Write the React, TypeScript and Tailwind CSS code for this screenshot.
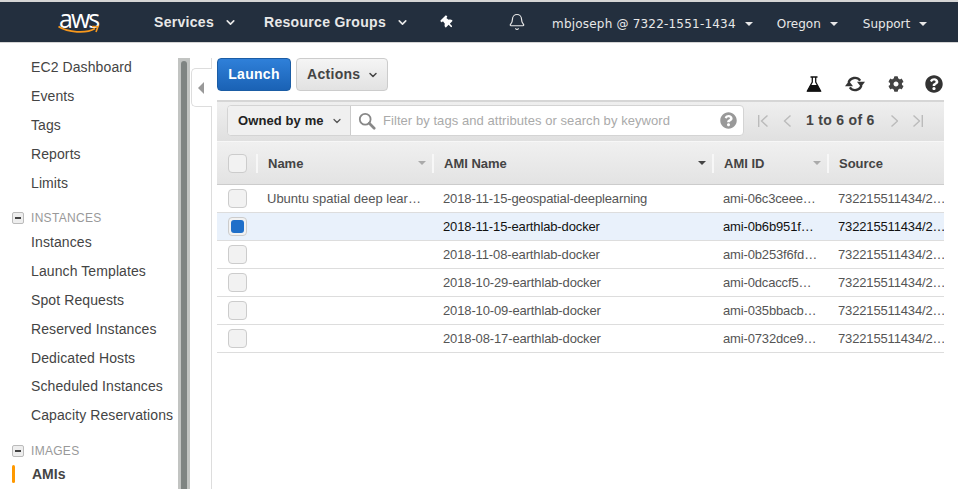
import { Bell, ChevronDown } from 'lucide-react'
import { FaCog, FaQuestionCircle, FaThumbtack } from 'react-icons/fa'

const sans = 'font-["Liberation_Sans",Arial,sans-serif]'

const rows = [
  { name: 'Ubuntu spatial deep lear…', ami: '2018-11-15-geospatial-deeplearning', id: 'ami-06c3ceee…' },
  { name: '', ami: '2018-11-15-earthlab-docker', id: 'ami-0b6b951f…', selected: true },
  { name: '', ami: '2018-11-08-earthlab-docker', id: 'ami-0b253f6fd…' },
  { name: '', ami: '2018-10-29-earthlab-docker', id: 'ami-0dcaccf5…' },
  { name: '', ami: '2018-10-09-earthlab-docker', id: 'ami-035bbacb…' },
  { name: '', ami: '2018-08-17-earthlab-docker', id: 'ami-0732dce9…' },
]

function SideLink({ label, tall }: { label: string; tall?: boolean }) {
  return (
    <div className={`flex items-center pl-[31px] text-[14px] tracking-[0.1px] text-[#444] ${tall ? 'h-[29px]' : 'h-[28.8px]'}`}>
      {label}
    </div>
  )
}

function SideGroup({ label }: { label: string }) {
  return (
    <div className="flex h-[18px] items-center text-[12px] tracking-[0.3px] text-[#999]">
      <span className="ml-[12px] mr-[7px] flex h-[12px] w-[12px] items-center justify-center rounded-[2px] border border-[#bbb] bg-[#eee]">
        <span className="h-[2px] w-[6px] bg-[#444]" />
      </span>
      {label}
    </div>
  )
}

function Check({ selected }: { selected?: boolean }) {
  return (
    <span className="flex h-[19px] w-[19px] items-center justify-center rounded-[4px] border border-[#ccc] bg-[#f2f2f2]">
      {selected && <span className="h-[13px] w-[13px] rounded-[3px] bg-[#1f6fc9]" />}
    </span>
  )
}

function HeaderCell({ label, width, dark }: { label: string; width: string; dark?: boolean }) {
  return (
    <div className={`${width} flex h-full shrink-0 items-center`}>
      <div className="flex h-[19px] w-full items-center border-l-2 border-[#f7f7f7] pl-[10px] pr-[6px] text-[13px] font-bold text-[#444]">
        <span className="mt-[1px] flex-1">{label}</span>
        <span className={`h-0 w-0 border-x-[4px] border-t-[4px] border-x-transparent ${dark ? 'border-t-[#444]' : 'border-t-[#aaa]'}`} />
      </div>
    </div>
  )
}

function Caret() {
  return <span className="ml-[9px] h-0 w-0 border-x-[4px] border-t-[4px] border-x-transparent border-t-[#e8e8e8]" />
}

function PageIcon({ d, width, className }: { d: string; width: number; className: string }) {
  return (
    <svg viewBox={`0 0 ${width} 12`} width={width} height={12} className={className}>
      <path d={d} fill="none" stroke="#bbb" strokeWidth="1.4" />
    </svg>
  )
}

export default function App() {
  return (
    <div className={`${sans} h-[489px] w-[958px] overflow-hidden bg-white`}>
      <header className="box-border flex h-[43px] items-center border-t-2 border-b border-t-[#d5d5d5] border-b-[#d5d5d5] bg-[#232f3e] text-[#e8e8e8]">
        <div className="relative ml-[58px] h-[40px] w-[42px]">
          <span className='absolute left-[1px] top-[2px] font-["Open_Sans",sans-serif] text-[25px] leading-[28px] tracking-[-2px] text-white'>aws</span>
          <svg viewBox="0 0 42 10" className="absolute left-0 top-[23px] h-[10px] w-[42px]">
            <path d="M0.5 1.5 C10 7.5 28 9 37 3.5" fill="none" stroke="#f7981d" strokeWidth="1.8" />
            <path d="M34 1.5 L40 1.5 L38 7" fill="none" stroke="#f7981d" strokeWidth="1.6" />
          </svg>
        </div>
        <div className="ml-[54px] flex items-center text-[14px] font-bold tracking-[0.3px]">
          Services
          <ChevronDown className="ml-[10px] h-[13px] w-[13px]" strokeWidth={3} />
        </div>
        <div className="ml-[27px] flex items-center text-[14px] font-bold tracking-[0.3px]">
          Resource Groups
          <ChevronDown className="ml-[10px] h-[13px] w-[13px]" strokeWidth={3} />
        </div>
        <FaThumbtack className="ml-[32px] h-[13px] w-[13px] -rotate-45 text-white" />
        <Bell className="ml-[54px] h-[18px] w-[18px]" strokeWidth={1.6} />
        <div className='ml-[26px] mt-[3px] flex items-center font-["DejaVu_Sans",sans-serif] text-[12px] tracking-[0.2px]'>
          mbjoseph @ 7322-1551-1434
          <Caret />
          <span className="ml-[24px] tracking-normal">Oregon</span>
          <Caret />
          <span className="ml-[25px] tracking-normal">Support</span>
          <Caret />
        </div>
      </header>

      <div className="flex h-[446px]">
        <aside className="w-[178px] pt-[10px]">
          <SideLink tall label="EC2 Dashboard" />
          <SideLink tall label="Events" />
          <SideLink tall label="Tags" />
          <SideLink tall label="Reports" />
          <SideLink tall label="Limits" />
          <div className="mt-[11px]">
            <SideGroup label="INSTANCES" />
          </div>
          <div className="mt-[1px]">
            <SideLink tall label="Instances" />
            <SideLink tall label="Launch Templates" />
            <SideLink tall label="Spot Requests" />
            <SideLink label="Reserved Instances" />
            <SideLink label="Dedicated Hosts" />
            <SideLink label="Scheduled Instances" />
            <SideLink label="Capacity Reservations" />
          </div>
          <div className="mt-[12px]">
            <SideGroup label="IMAGES" />
          </div>
          <div className="mt-[2px] flex h-[24px] items-center">
            <span className="ml-[12px] h-[18px] w-[3px] rounded-sm bg-[#f90]" />
            <span className="ml-[17px] text-[14px] font-bold text-[#444]">AMIs</span>
          </div>
        </aside>

        <div className="mt-[15px] flex w-[12px] justify-center bg-[#c2c4c2] pt-[3px]">
          <span className="h-full w-[6px] rounded-t-[3px] bg-[#7f8482]" />
        </div>

        <div className="mt-[15px] flex w-[22px] flex-col border-r border-r-[#ddd] pt-[10px]">
          <div className="-mr-[1px] ml-[1px] flex h-[39px] items-center justify-center rounded-l-[5px] border border-r-0 border-[#ddd] bg-white pr-[3px]">
            <span className="h-0 w-0 border-y-[6px] border-r-[6px] border-y-transparent border-r-[#999]" />
          </div>
        </div>

        <main className="ml-[5px] w-[727px] overflow-hidden">
          <div className="flex h-[57px] items-start pt-[15px]">
            <button className="flex h-[33px] w-[74px] items-center justify-center rounded-[4px] border border-[#1b5da5] bg-gradient-to-b from-[#2f80d9] to-[#1a62b5] text-[14px] font-bold tracking-[0.3px] text-white">
              Launch
            </button>
            <button className="ml-[5px] flex h-[33px] w-[92px] items-center gap-[7px] rounded-[4px] border border-[#ccc] bg-gradient-to-b from-[#f5f5f5] to-[#e2e2e2] pl-[10px] text-[14px] font-bold tracking-[0.3px] text-[#444]">
              Actions
              <ChevronDown className="h-[12px] w-[12px]" strokeWidth={3} />
            </button>
            <div className="ml-auto mr-[1px] flex items-center pt-[16px] text-[#333]">
              <svg viewBox="0 0 16 16" className="h-[16px] w-[16px]">
                <path d="M4.5 1 H11.5 M6.3 1 V6 L1.5 14.8 H14.5 L9.7 6 V1" fill="none" stroke="#111" strokeWidth="1.3" />
                <path d="M4.6 9 L0.8 15.8 H15.2 L11.4 9 Z" fill="#111" />
              </svg>
              <svg viewBox="0 0 20 20" className="ml-[23px] h-[20px] w-[20px]">
                <path d="M3.6 8.6 A6.6 6.6 0 0 1 15.2 6.6" fill="none" stroke="#333" strokeWidth="2.4" />
                <path d="M12 7.8 H20 L16 13 Z" fill="#333" />
                <path d="M16.4 11.4 A6.6 6.6 0 0 1 4.8 13.4" fill="none" stroke="#333" strokeWidth="2.4" />
                <path d="M0 12.2 H8 L4 7 Z" fill="#333" />
              </svg>
              <FaCog className="ml-[23px] h-[16px] w-[16px] text-[#444]" />
              <FaQuestionCircle className="ml-[21px] h-[18px] w-[18px]" />
            </div>
          </div>

          <div className="box-border flex h-[42px] items-start border-t-2 border-b border-t-[#d6d6d6] border-b-[#f7f7f7] bg-gradient-to-b from-[#efefef] to-[#e0e0e0] pl-[10px] pt-[3px]">
            <div className="flex h-[31px] w-[517px] shrink-0 items-center rounded-[4px] border border-[#d4d4d4] bg-white">
              <div className="flex h-full w-[123px] items-center gap-[7px] rounded-l-[4px] border-r border-r-[#ccc] bg-[#f0f0f0] pl-[10px] text-[13px] font-bold tracking-[0.1px] text-[#222]">
                Owned by me
                <ChevronDown className="h-[12px] w-[12px] text-[#555]" strokeWidth={2.5} />
              </div>
              <svg viewBox="0 0 20 20" className="ml-[7px] h-[18px] w-[18px]">
                <circle cx="8" cy="8" r="6" fill="none" stroke="#888" strokeWidth="2" />
                <path d="M12.5 12.5 L18 18" stroke="#888" strokeWidth="3" strokeLinecap="round" />
              </svg>
              <span className="ml-[7px] flex-1 text-[13px] tracking-[0.06px] text-[#aaa]">Filter by tags and attributes or search by keyword</span>
              <FaQuestionCircle className="mr-[6px] h-[17px] w-[17px] text-[#999]" />
            </div>
            <div className="flex h-[31px] items-center">
              <PageIcon d="M0.7 0 V12 M9.5 0.5 L3.5 6 L9.5 11.5" width={10} className="ml-[14px]" />
              <PageIcon d="M7.5 0.5 L1.5 6 L7.5 11.5" width={8} className="ml-[15px]" />
              <span className="ml-[15px] text-[14px] font-bold tracking-[0.3px] text-[#444]">1 to 6 of 6</span>
              <PageIcon d="M0.5 0.5 L6.5 6 L0.5 11.5" width={7} className="ml-[16px]" />
              <PageIcon d="M0.5 0.5 L6.5 6 L0.5 11.5 M9.3 0 V12" width={10} className="ml-[15px]" />
            </div>
          </div>

          <div className="flex h-[43px] items-center border-b border-b-[#ccc] bg-gradient-to-b from-[#f0f0f0] to-[#e3e3e3]">
            <div className="flex w-[39px] shrink-0 items-center pl-[11px]">
              <Check />
            </div>
            <HeaderCell label="Name" width="w-[176px]" />
            <HeaderCell label="AMI Name" width="w-[280px]" dark />
            <HeaderCell label="AMI ID" width="w-[115px]" />
            <HeaderCell label="Source" width="w-[240px]" />
          </div>

          {rows.map((row) => (
            <div
              key={row.ami + row.id}
              className={`flex h-[28px] items-center border-b border-b-[#ddd] text-[13px] ${row.selected ? 'bg-[#e9f1fb] text-[#111]' : 'text-[#555]'}`}
            >
              <div className="flex w-[50px] shrink-0 pl-[11px]">
                <Check selected={row.selected} />
              </div>
              <div className="w-[176px] shrink-0 whitespace-nowrap">{row.name}</div>
              <div className="w-[280px] shrink-0 whitespace-nowrap tracking-[-0.13px]">{row.ami}</div>
              <div className="w-[115px] shrink-0 whitespace-nowrap tracking-[-0.15px]">{row.id}</div>
              <div className="w-[106px] shrink-0 whitespace-nowrap tracking-[-0.15px]">732215511434/2…</div>
            </div>
          ))}
        </main>
      </div>
    </div>
  )
}
